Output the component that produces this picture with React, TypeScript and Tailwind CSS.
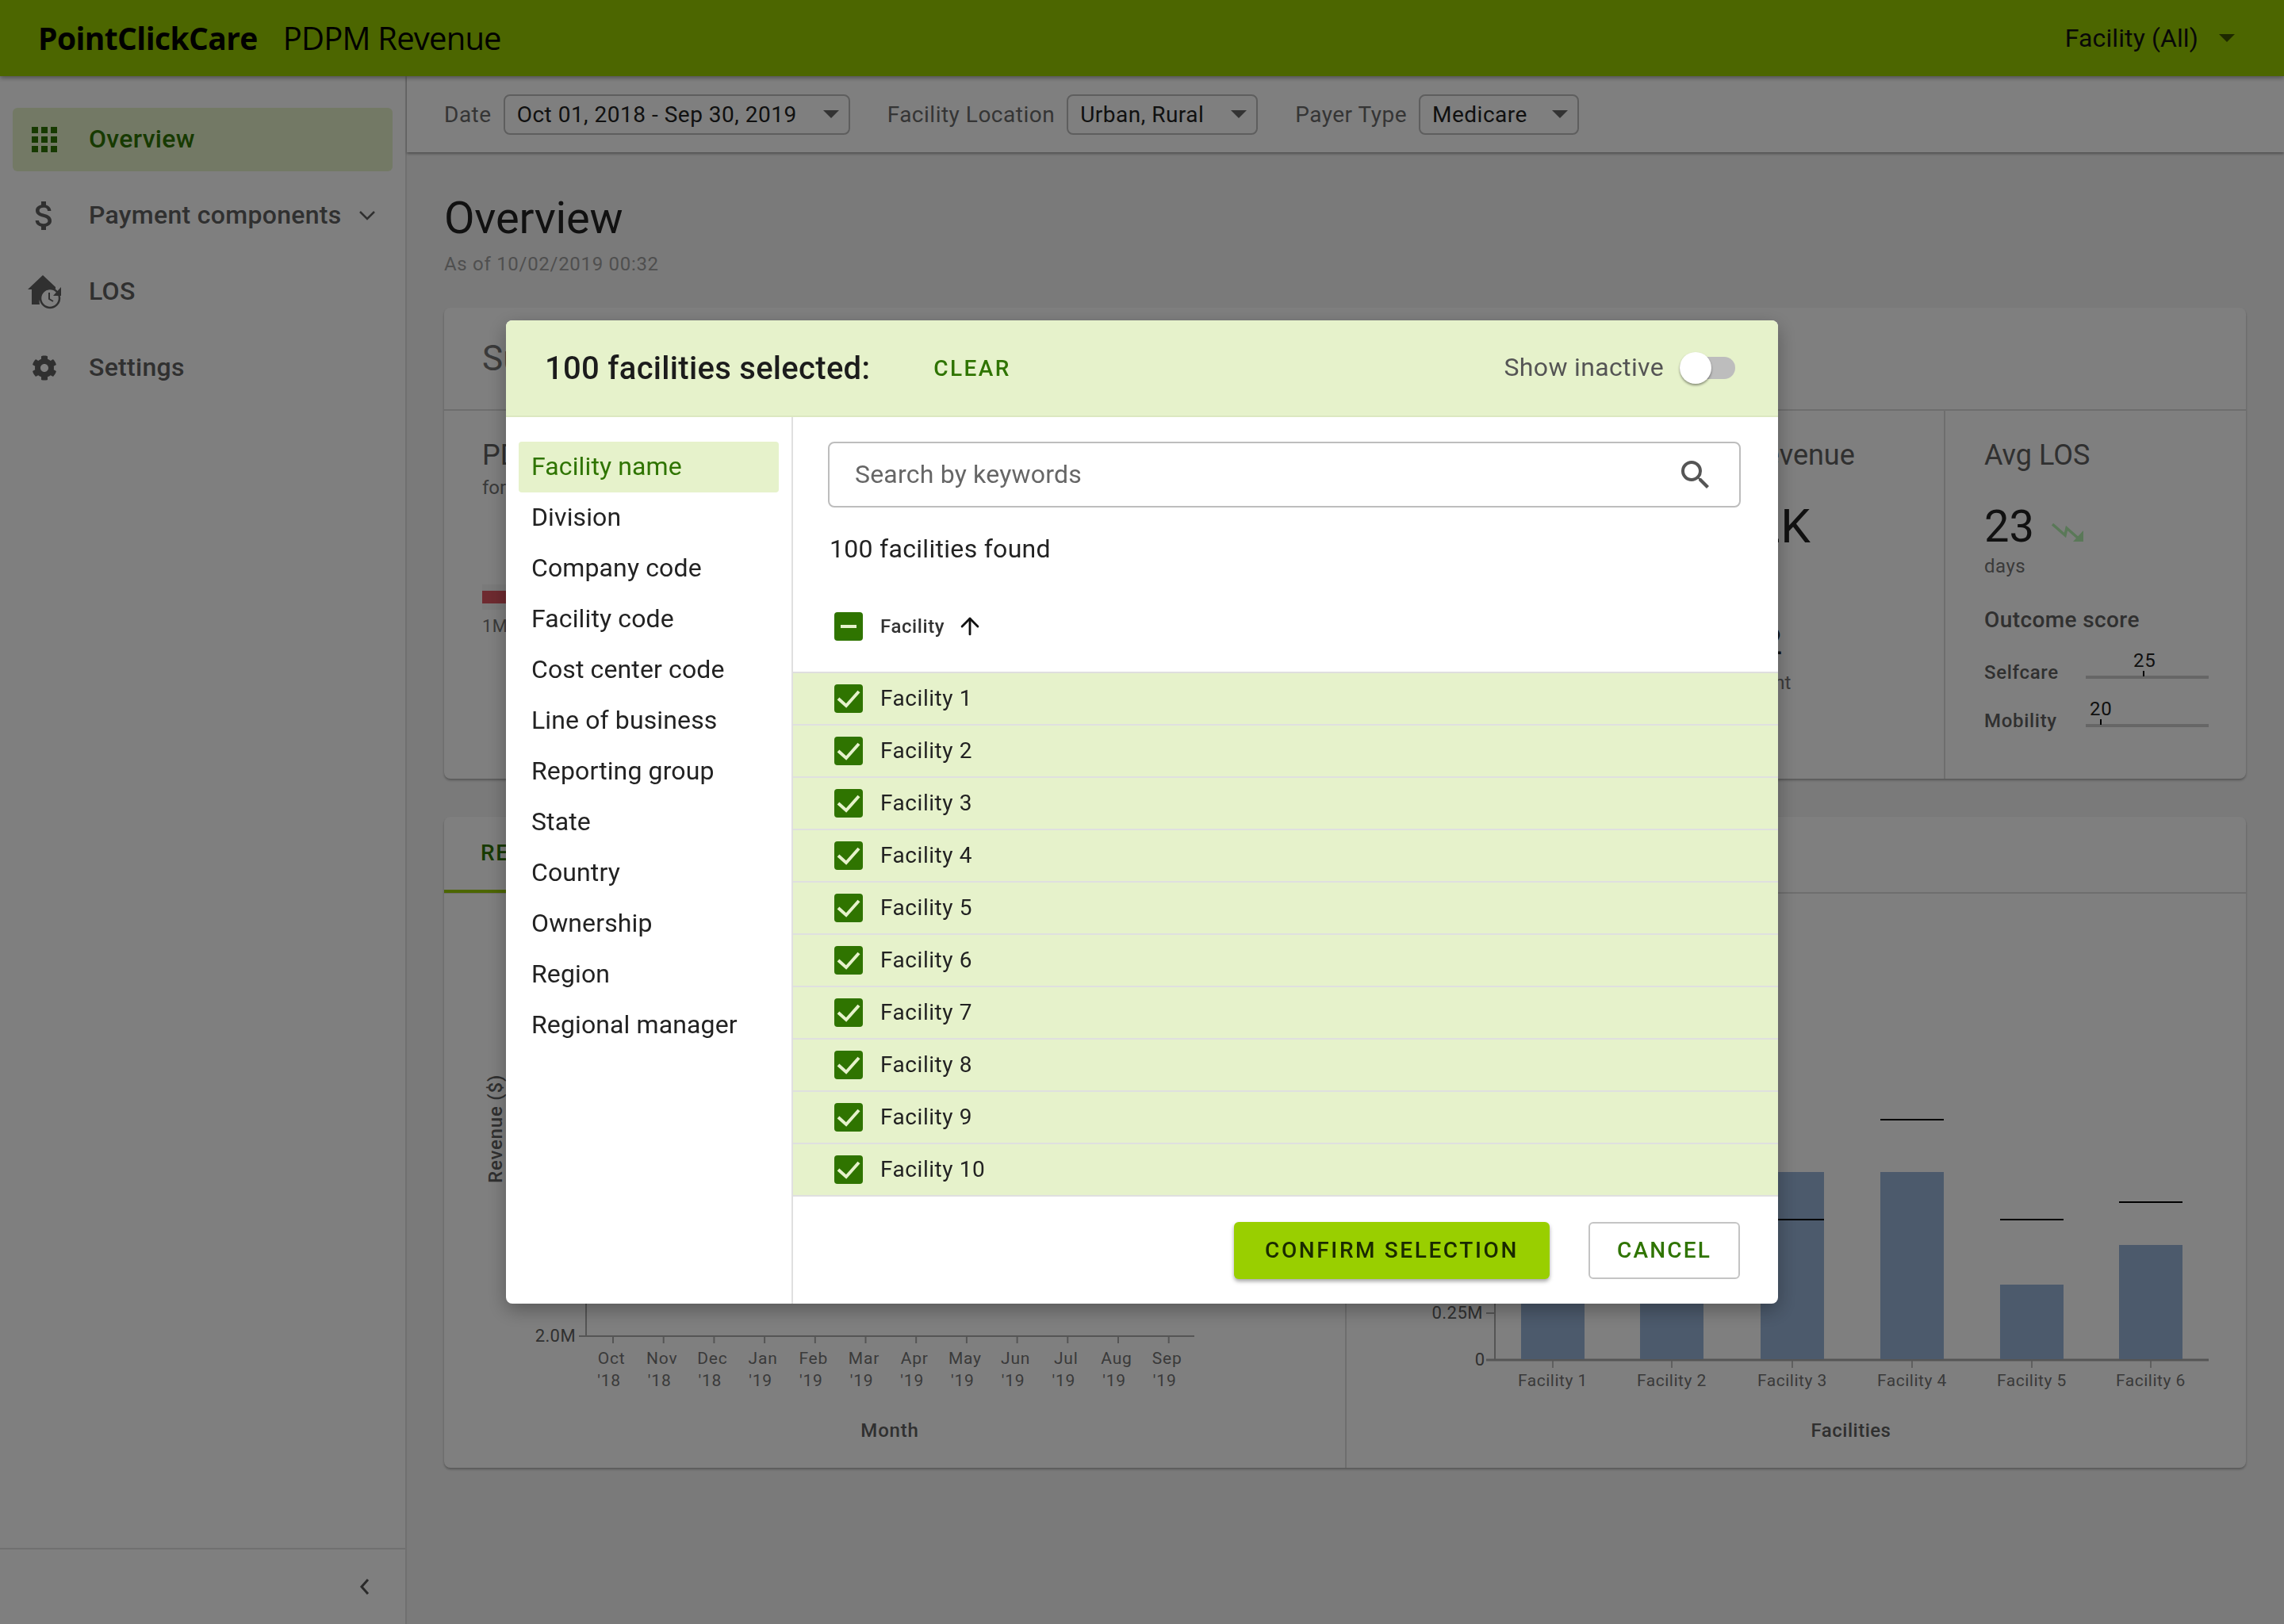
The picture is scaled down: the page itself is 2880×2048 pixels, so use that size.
import { ArrowUp } from 'lucide-react'
import { FaCog } from 'react-icons/fa'

const groupings = [
  'Facility name',
  'Division',
  'Company code',
  'Facility code',
  'Cost center code',
  'Line of business',
  'Reporting group',
  'State',
  'Country',
  'Ownership',
  'Region',
  'Regional manager',
]

const facilityRows = [1, 2, 3, 4, 5, 6, 7, 8, 9, 10]

const months = ['Oct', 'Nov', 'Dec', 'Jan', 'Feb', 'Mar', 'Apr', 'May', 'Jun', 'Jul', 'Aug', 'Sep']

const bars = [
  { name: 'Facility 1', x: 1918, top: 1478, target: 1411 },
  { name: 'Facility 2', x: 2068, top: 1478, target: 1411 },
  { name: 'Facility 3', x: 2220, top: 1478, target: 1537 },
  { name: 'Facility 4', x: 2371, top: 1478, target: 1411 },
  { name: 'Facility 5', x: 2522, top: 1620, target: 1537 },
  { name: 'Facility 6', x: 2672, top: 1570, target: 1515 },
]

function Caret({ className }: { className?: string }) {
  return (
    <svg width="20" height="10" viewBox="0 0 20 10" className={className} aria-hidden="true">
      <path d="M0 0h20L10 10z" fill="currentColor" />
    </svg>
  )
}

function FilterSelect({ label, value, width }: { label: string; value: string; width: string }) {
  return (
    <div className="flex items-center gap-[15px]">
      <span className="pt-[2px] text-[28px] tracking-[0.5px] text-[#6b6b6b]">{label}</span>
      <div className={`flex h-[51px] items-center justify-between rounded-[8px] border-2 border-[#bdbdbd] pl-[15px] pr-[12px] text-[28px] tracking-[0.5px] text-[#222222] ${width}`}>
        <span className="pt-[2px]">{value}</span>
        <Caret className="text-[#666666]" />
      </div>
    </div>
  )
}

function LosIcon() {
  return (
    <svg width="44" height="44" viewBox="0 0 44 44" aria-hidden="true">
      <path d="M20 1 L36 16 L36 19 A16 16 0 0 0 16 38 L6 38 L6 19 L1 19 Z" fill="currentColor" />
      <circle cx="29" cy="30" r="12" fill="none" stroke="currentColor" strokeWidth="2.5" />
      <path d="M28 23v8l5 3" fill="none" stroke="currentColor" strokeWidth="2" />
      <path d="M43 16v11H33z" fill="currentColor" />
    </svg>
  )
}

function NavItem({ label, icon, active, chevron }: { label: string; icon: React.ReactNode; active?: boolean; chevron?: boolean }) {
  return (
    <div className={`flex h-20 items-center rounded-[6px] ${active ? 'bg-[#e6f2cb] text-[#2f7400]' : 'text-[#616161]'}`}>
      <div className="flex w-[80px] justify-center">{icon}</div>
      <span className="pb-[2px] pl-4 text-[32px] font-medium tracking-[0.3px]">{label}</span>
      {chevron && (
        <svg width="22" height="14" viewBox="0 0 22 14" className="ml-[21px]" aria-hidden="true">
          <path d="M2 2l9 9 9-9" fill="none" stroke="currentColor" strokeWidth="2.5" />
        </svg>
      )}
    </div>
  )
}

function Sidebar() {
  return (
    <aside className="flex w-[513px] shrink-0 flex-col border-r-2 border-[#e0e0e0] bg-white">
      <nav className="flex flex-1 flex-col gap-4 px-4 pt-10">
        <NavItem
          active
          label="Overview"
          icon={
            <svg width="32" height="32" viewBox="0 0 32 32" aria-hidden="true">
              <path
                d="M0 0h8v8H0zM12 0h8v8h-8zM24 0h8v8h-8zM0 12h8v8H0zM12 12h8v8h-8zM24 12h8v8h-8zM0 24h8v8H0zM12 24h8v8h-8zM24 24h8v8h-8z"
                fill="currentColor"
              />
            </svg>
          }
        />
        <NavItem
          chevron
          label="Payment components"
          icon={
            <svg width="48" height="48" viewBox="0 0 24 24" aria-hidden="true">
              <path
                fill="currentColor"
                d="M11.8 10.9c-2.27-.59-3-1.2-3-2.15 0-1.09 1.01-1.85 2.7-1.85 1.78 0 2.44.85 2.5 2.1h2.21c-.07-1.72-1.12-3.3-3.21-3.81V3h-3v2.16c-1.94.42-3.5 1.68-3.5 3.61 0 2.31 1.91 3.46 4.7 4.13 2.5.6 3 1.48 3 2.41 0 .69-.49 1.79-2.7 1.79-2.06 0-2.87-.92-2.98-2.1h-2.2c.12 2.19 1.76 3.42 3.68 3.83V21h3v-2.15c1.95-.37 3.5-1.5 3.5-3.55 0-2.84-2.43-3.81-4.7-4.4z"
              />
            </svg>
          }
        />
        <NavItem label="LOS" icon={<LosIcon />} />
        <NavItem label="Settings" icon={<FaCog size={32} />} />
      </nav>
      <div className="flex h-24 items-center justify-end border-t-2 border-[#e0e0e0] pr-[44px] text-[#555555]">
        <svg width="14" height="22" viewBox="0 0 14 22" aria-hidden="true">
          <path d="M11 2l-8 9 8 9" fill="none" stroke="currentColor" strokeWidth="3" />
        </svg>
      </div>
    </aside>
  )
}

function ScoreRow({ label, score, left, valueLeft }: { label: string; score: number; left: string; valueLeft: string }) {
  return (
    <div className="flex h-9 items-center text-[24px] font-medium tracking-[0.7px] text-[#616161]">
      <span className="w-[128px]">{label}</span>
      <div className="relative mt-[12px] h-1 w-[155px] bg-[#cccccc]">
        <div className={`absolute top-[-6px] h-[7px] w-[2px] bg-black ${left}`} />
        <span className={`absolute top-[-31px] text-[24px] font-normal leading-6 text-[#222222] ${valueLeft}`}>{score}</span>
      </div>
    </div>
  )
}

function SummaryCard() {
  return (
    <section className="h-[594px] rounded-lg bg-white shadow-[0_2px_3px_rgba(0,0,0,0.3)]">
      <div className="flex h-[130px] items-center border-b-2 border-[#dddddd] pl-12 text-[44px] text-[#757575]">Summary</div>
      <div className="flex h-[464px]">
        <div className="flex-1 pl-12 pt-[34px]">
          <div className="text-[36px] leading-[44px] text-[#616161]">PDPM Revenue</div>
          <div className="mt-[3px] text-[24px] leading-8 text-[#757575]">for the period</div>
          <div className="mt-[106px] h-[32px] w-[500px] bg-[#f5f5f5] pt-[8px]">
            <div className="h-4 w-[300px] bg-[#dd5560]" />
          </div>
          <div className="mt-[4px] text-[22px] tracking-[0.5px] text-[#757575]">1M</div>
        </div>
        <div className="w-[349px] pl-[42px] pt-[34px]">
          <div className="text-[36px] leading-[44px] text-[#616161]">Avg revenue</div>
          <div className="mt-[36px] text-[60px] leading-16 text-[#222222]">$42K</div>
          <div className="mt-[89px] text-[46px] leading-[48px] text-[#222222]">$112</div>
          <div className="mt-[12px] text-[24px] leading-8 text-[#757575]">per patient</div>
        </div>
        <div className="w-[381px] border-l-2 border-[#dddddd] pl-[49px] pt-[34px]">
          <div className="text-[36px] leading-[44px] text-[#616161]">Avg LOS</div>
          <div className="mt-[36px] flex items-center gap-[22px]">
            <span className="text-[56px] leading-16 text-[#222222]">23</span>
            <svg width="40" height="23" viewBox="0 0 40 23" className="mt-[14px] text-[#b4f0b0]" aria-hidden="true">
              <path d="M1 1l16 14 2-9 17 15" fill="none" stroke="currentColor" strokeWidth="3.5" />
              <path d="M40 9v14H27z" fill="currentColor" />
            </svg>
          </div>
          <div className="mt-[2px] text-[24px] leading-8 tracking-[0.5px] text-[#757575]">days</div>
          <div className="mt-[34px] text-[28px] font-medium leading-9 tracking-[0.4px] text-[#616161]">Outcome score</div>
          <div className="mt-[30px] flex flex-col gap-[25px]">
            <ScoreRow label="Selfcare" score={25} left="left-[72px]" valueLeft="left-[60px]" />
            <ScoreRow label="Mobility" score={20} left="left-[18px]" valueLeft="left-[5px]" />
          </div>
        </div>
      </div>
    </section>
  )
}

function RevenueChart() {
  return (
    <svg width="1136" height="724" viewBox="560 1127 1136 724" className="block" fontFamily="Roboto" aria-label="Revenue by month">
      <text x="0" y="0" transform="translate(633 1492) rotate(-90)" fontSize="24" fontWeight="500" letterSpacing="0.8" fill="#616161">Revenue ($)</text>
      <line x1="739" y1="1200" x2="739" y2="1686" stroke="#aaaaaa" strokeWidth="2" />
      <line x1="730" y1="1685" x2="1506" y2="1685" stroke="#aaaaaa" strokeWidth="2" />
      <text x="726" y="1692" textAnchor="end" fontSize="22" letterSpacing="0.4" fill="#616161">2.0M</text>
      {months.map((m, i) => {
        const x = 773 + i * 63.7
        const year = i < 3 ? "'18" : "'19"
        return (
          <g key={m} fontSize="21" letterSpacing="0.8" fill="#757575">
            <line x1={x} y1="1686" x2={x} y2="1694" stroke="#aaaaaa" strokeWidth="2" />
            <text x={x - 2} y="1720" textAnchor="middle">{m}</text>
            <text x={x - 5} y="1748" textAnchor="middle">{year}</text>
          </g>
        )
      })}
      <text x="1122" y="1812" textAnchor="middle" fontSize="24" fontWeight="500" letterSpacing="0.8" fill="#616161">Month</text>
    </svg>
  )
}

function FacilityChart() {
  return (
    <svg width="1134" height="724" viewBox="1698 1127 1134 724" className="block" fontFamily="Roboto" aria-label="Revenue by facility">
      <line x1="1885" y1="1300" x2="1885" y2="1714" stroke="#aaaaaa" strokeWidth="2" />
      <line x1="1874" y1="1715" x2="2785" y2="1715" stroke="#aaaaaa" strokeWidth="3" />
      <line x1="1874" y1="1656" x2="1885" y2="1656" stroke="#aaaaaa" strokeWidth="2" />
      <text x="1870" y="1663" textAnchor="end" fontSize="22" letterSpacing="0.5" fill="#616161">0.25M</text>
      <text x="1872" y="1722" textAnchor="end" fontSize="22" fill="#616161">0</text>
      {bars.map((b) => (
        <g key={b.name}>
          <rect x={b.x} y={b.top} width="80" height={1714 - b.top} fill="#98b4d8" />
          <rect x={b.x} y={b.target} width="80" height="2" fill="#000000" />
          <line x1={b.x + 40} y1="1716" x2={b.x + 40} y2="1725" stroke="#aaaaaa" strokeWidth="1.5" />
          <text x={b.x + 40} y="1748" textAnchor="middle" fontSize="21" letterSpacing="0.5" fill="#757575">{b.name}</text>
        </g>
      ))}
      <text x="2334" y="1812" textAnchor="middle" fontSize="24" fontWeight="500" letterSpacing="0.5" fill="#616161">Facilities</text>
    </svg>
  )
}

function ChartsCard() {
  return (
    <section className="mt-12 h-[821px] rounded-lg bg-white shadow-[0_2px_3px_rgba(0,0,0,0.3)]">
      <div className="flex h-[97px] border-b-2 border-[#dddddd]">
        <div className="flex h-[96px] w-[400px] items-center border-b-4 border-[#99cc00] pl-[46px] text-[28px] font-medium tracking-[1.6px] text-[#2f7400]">
          REVENUE
        </div>
      </div>
      <div className="flex">
        <div className="border-r-2 border-[#dddddd]">
          <RevenueChart />
        </div>
        <FacilityChart />
      </div>
    </section>
  )
}

function Checkbox({ indeterminate }: { indeterminate?: boolean }) {
  return (
    <div className="flex h-9 w-9 items-center justify-center rounded-[4px] bg-[#2f7400]">
      {indeterminate ? (
        <div className="h-1 w-5 bg-[#e6f2cb]" />
      ) : (
        <svg width="36" height="36" viewBox="0 0 36 36" aria-hidden="true">
          <path d="M5 18l10 9L31 9" fill="none" stroke="#e6f2cb" strokeWidth="4" />
        </svg>
      )}
    </div>
  )
}

function FacilityDialog() {
  return (
    <div className="fixed inset-0 z-20 flex items-center justify-center bg-black/50">
      <div className="flex h-[1240px] w-[1604px] flex-col overflow-hidden rounded-lg bg-white shadow-[0_8px_24px_rgba(0,0,0,0.3)]">
        <div className="flex h-[122px] shrink-0 items-center border-b-2 border-[#dce8c0] bg-[#e6f2cb] pl-[49px] pr-[54px]">
          <span className="pt-[2px] text-[40px] font-medium tracking-[0.3px] text-[#1c1c1c]">100 facilities selected:</span>
          <span className="ml-[80px] pt-[2px] text-[28px] font-medium tracking-[2.4px] text-[#2f7400]">CLEAR</span>
          <span className="ml-auto pb-[2px] text-[32px] tracking-[0.35px] text-[#555555]">Show inactive</span>
          <div className="relative ml-[20px] h-7 w-[70px] rounded-full bg-[#bdbdbd]">
            <div className="absolute left-0 top-[-6px] h-10 w-10 rounded-full bg-white shadow-[0_2px_3px_rgba(0,0,0,0.4)]" />
          </div>
        </div>
        <div className="flex flex-1">
          <div className="w-[362px] shrink-0 border-r-2 border-[#e0e0e0] px-4 pt-[31px]">
            {groupings.map((g, i) => (
              <div
                key={g}
                className={`flex h-16 items-center rounded-[4px] pb-[3px] pl-4 text-[32px] tracking-[0.12px] ${i === 0 ? 'bg-[#e6f2cb] text-[#2f7400]' : 'text-[#222222]'}`}
              >
                {g}
              </div>
            ))}
          </div>
          <div className="flex flex-1 flex-col">
            <div className="ml-[44px] mr-[47px] mt-[31px] flex h-[83px] items-center justify-between rounded-lg border-2 border-[#bdbdbd] pl-8 pr-[31px]">
              <span className="pb-[2px] text-[32px] tracking-[0.2px] text-[#666666]">Search by keywords</span>
              <svg width="48" height="48" viewBox="0 0 24 24" aria-hidden="true">
                <path
                  fill="#555555"
                  d="M15.5 14h-.79l-.28-.27A6.471 6.471 0 0 0 16 9.5 6.5 6.5 0 1 0 9.5 16c1.61 0 3.09-.59 4.23-1.57l.27.28v.79l5 4.99L20.49 19l-4.99-5zm-6 0C7.01 14 5 11.99 5 9.5S7.01 5 9.5 5 14 7.01 14 9.5 11.99 14 9.5 14z"
                />
              </svg>
            </div>
            <div className="ml-[46px] mt-[32px] text-[32px] leading-10 tracking-[0.3px] text-[#222222]">100 facilities found</div>
            <div className="flex h-[137px] shrink-0 items-center border-b-2 border-[#dfdfdf] pl-[52px] pt-5">
              <Checkbox indeterminate />
              <span className="ml-[22px] text-[24px] font-medium tracking-[0.6px] text-[#333333]">Facility</span>
              <ArrowUp size={34} strokeWidth={2} className="ml-[15px] text-[#111111]" />
            </div>
            {facilityRows.map((n) => (
              <div key={n} className="flex h-[66px] shrink-0 items-center border-b-2 border-[#dfe0df] bg-[#e6f2cb] pl-[52px]">
                <Checkbox />
                <span className="ml-[22px] text-[28px] tracking-[0.55px] text-[#222222]">Facility {n}</span>
              </div>
            ))}
            <div className="flex flex-1 items-center justify-end gap-[49px] pr-[48px]">
              <div className="flex h-[72px] w-[398px] items-center justify-center rounded-[6px] bg-[#99cf00] text-[28px] font-medium tracking-[2.6px] text-[#1a2a00] shadow-[0_3px_5px_rgba(0,0,0,0.35)]">
                CONFIRM SELECTION
              </div>
              <div className="flex h-[72px] w-[191px] items-center justify-center rounded-[6px] border-2 border-[#c4c4c4] text-[28px] font-medium tracking-[2.2px] text-[#2f7400]">
                CANCEL
              </div>
            </div>
          </div>
        </div>
      </div>
    </div>
  )
}

export default function App() {
  return (
    <div className="flex h-[2048px] flex-col overflow-hidden bg-[#f5f5f5] font-['Roboto',sans-serif]">
      <header className="z-10 flex h-24 shrink-0 items-center bg-[#99cc00] pl-12 pr-[50px] text-black shadow-[0_2px_6px_rgba(0,0,0,0.4)]">
        <span className="font-['Open_Sans',sans-serif] text-[39px] font-bold tracking-[-0.6px]">PointClickCare</span>
        <span className="ml-8 font-['Open_Sans',sans-serif] text-[40px] tracking-[-0.8px]">PDPM Revenue</span>
        <span className="ml-auto text-[32px] tracking-[0.1px] text-[#111111]">Facility (All)</span>
        <Caret className="ml-[26px] mr-[12px] text-black/60" />
      </header>
      <div className="flex flex-1">
        <Sidebar />
        <div className="flex min-w-0 flex-1 flex-col">
          <div className="flex h-24 shrink-0 items-center gap-[47px] bg-white pl-[47px] shadow-[0_2px_3px_rgba(0,0,0,0.35)]">
            <FilterSelect label="Date" value="Oct 01, 2018 - Sep 30, 2019" width="w-[437px]" />
            <FilterSelect label="Facility Location" value="Urban, Rural" width="w-[241px]" />
            <FilterSelect label="Payer Type" value="Medicare" width="w-[202px]" />
          </div>
          <main className="pl-[47px] pr-[48px] pt-[51px]">
            <h1 className="text-[56px] leading-16 tracking-[-0.2px] text-[#222222]">Overview</h1>
            <p className="mt-[10px] text-[24px] leading-8 tracking-[0.7px] text-[#9e9e9e]">As of 10/02/2019 00:32</p>
            <div className="mt-[39px]">
              <SummaryCard />
              <ChartsCard />
            </div>
          </main>
        </div>
      </div>
      <FacilityDialog />
    </div>
  )
}
